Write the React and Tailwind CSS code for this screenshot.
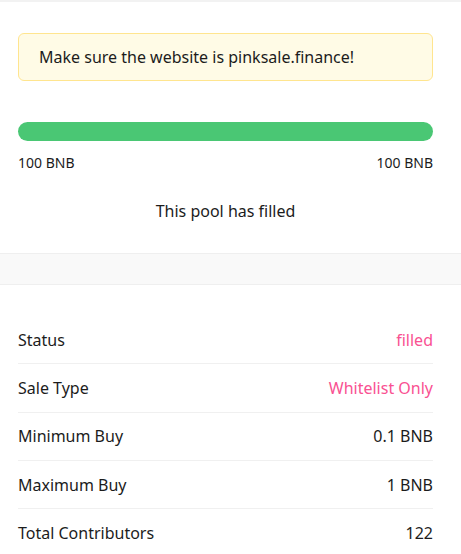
export default function App() {
  const rows = [
    ["Status", "filled", true],
    ["Sale Type", "Whitelist Only", true],
    ["Minimum Buy", "0.1 BNB", false],
    ["Maximum Buy", "1 BNB", false],
    ["Total Contributors", "122", false],
  ];
  return (
    <div className="w-[461px] h-[554px] overflow-hidden bg-white text-[#1c1c1c]" style={{ fontFamily: '"Noto Sans", "Open Sans", sans-serif' }}>
      <div className="border-t-2 border-[#f2f2f2] pl-[18px] pr-[28px] pt-[31px] pb-[30px]">
        <div className="h-[48px] flex items-center rounded-md border border-[#ffe58f] bg-[#fffbe6] pl-5 text-[16px] leading-6">
          Make sure the website is pinksale.finance!
        </div>
        <div className="mt-[41px] h-[19px] rounded-full bg-[#4ac774]" />
        <div className="mt-[12px] flex justify-between text-[14px] leading-5">
          <span>100 BNB</span>
          <span>100 BNB</span>
        </div>
        <div className="mt-[26px] text-center text-[16px] leading-6">This pool has filled</div>
      </div>
      <div className="h-[32px] border-y border-[#efefef] bg-[#f9f9f9]" />
      <div className="pl-[18px] pr-[28px] pt-[31px]">
        {rows.map(([k, v, pink], i) => (
          <div key={k} className={"flex h-[48.33px] items-center justify-between text-[16px] leading-6 " + (i < rows.length - 1 ? "border-b border-[#f0f0f0]" : "")}>
            <span>{k}</span>
            <span className={pink ? "text-[#f95192]" : ""}>{v}</span>
          </div>
        ))}
      </div>
    </div>
  );
}
